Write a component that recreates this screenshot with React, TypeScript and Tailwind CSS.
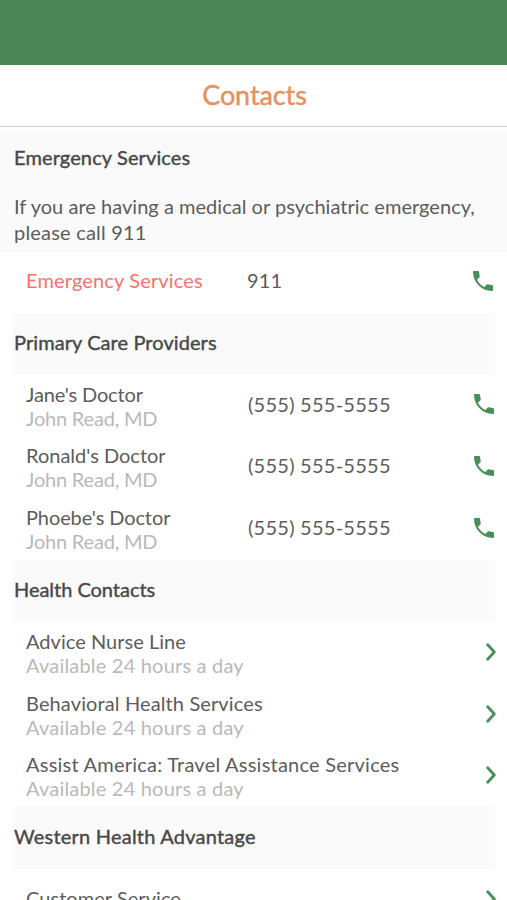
type Contact = {
  name: string
  nameClass: string
  note?: string
  noteClass?: string
  phone?: string
}

type Section = {
  title: string
  titleClass: string
  contacts: Contact[]
}

const sections: Section[] = [
  {
    title: 'Primary Care Providers',
    titleClass: 'tracking-[0.08px]',
    contacts: [
      { name: "Jane's Doctor", nameClass: 'tracking-[-0.15px]', note: 'John Read, MD', noteClass: 'tracking-[-0.2px]', phone: '(555) 555-5555' },
      { name: "Ronald's Doctor", nameClass: 'tracking-[0px]', note: 'John Read, MD', noteClass: 'tracking-[-0.2px]', phone: '(555) 555-5555' },
      { name: "Phoebe's Doctor", nameClass: 'tracking-[-0.1px]', note: 'John Read, MD', noteClass: 'tracking-[-0.2px]', phone: '(555) 555-5555' },
    ],
  },
  {
    title: 'Health Contacts',
    titleClass: 'tracking-[-0.03px]',
    contacts: [
      { name: 'Advice Nurse Line', nameClass: 'tracking-[0.03px]', note: 'Available 24 hours a day', noteClass: 'tracking-[0.2px]' },
      { name: 'Behavioral Health Services', nameClass: 'tracking-[0.12px]', note: 'Available 24 hours a day', noteClass: 'tracking-[0.2px]' },
      { name: 'Assist America: Travel Assistance Services', nameClass: 'tracking-[0.23px]', note: 'Available 24 hours a day', noteClass: 'tracking-[0.2px]' },
    ],
  },
  {
    title: 'Western Health Advantage',
    titleClass: 'tracking-[0.22px]',
    contacts: [{ name: 'Customer Service', nameClass: 'pb-1 tracking-[0.05px]' }],
  },
]

function PhoneIcon() {
  return (
    <svg viewBox="3 3 18 18" className="mb-[3px] h-5 w-5 shrink-0 fill-[#489059]">
      <path d="M6.62 10.79c1.44 2.83 3.76 5.14 6.59 6.59l2.2-2.2c.27-.27.67-.36 1.02-.24 1.12.37 2.33.57 3.57.57.55 0 1 .45 1 1V20c0 .55-.45 1-1 1-9.39 0-17-7.61-17-17 0-.55.45-1 1-1h3.5c.55 0 1 .45 1 1 0 1.25.2 2.45.57 3.57.11.35.03.74-.25 1.02l-2.2 2.2z" />
    </svg>
  )
}

function ChevronIcon() {
  return (
    <svg viewBox="0 0 10 18" className="h-[18px] w-[10px] shrink-0 fill-none stroke-[#489059]">
      <path d="M1.7 1.7 8.3 9l-6.6 7.3" strokeWidth="2.8" strokeLinecap="round" strokeLinejoin="round" />
    </svg>
  )
}

function ContactRow({ contact }: { contact: Contact }) {
  return (
    <div className="flex h-[61.8px] items-center pr-[13px] pl-[26px]">
      <div className={contact.phone ? 'w-[222px] shrink-0' : 'flex-1'}>
        <div className={`leading-6 whitespace-nowrap ${contact.nameClass}`}>{contact.name}</div>
        {contact.note && (
          <div className={`leading-6 whitespace-nowrap text-[#b9b9b9] ${contact.noteClass}`}>{contact.note}</div>
        )}
      </div>
      {contact.phone ? (
        <>
          <div className="flex-1 pb-1 tracking-[0.25px]">{contact.phone}</div>
          <PhoneIcon />
        </>
      ) : (
        <div className="-mr-[2px] mb-[2px] flex">
          <ChevronIcon />
        </div>
      )}
    </div>
  )
}

export default function App() {
  return (
    <div className="h-[900px] w-[507px] overflow-hidden bg-white font-['Lato','Open_Sans',sans-serif] text-[20px] text-[#5c5c5c]">
      {/* Status bar */}
      <div className="h-[65px] bg-[#4c8658]" />

      {/* Title */}
      <header className="flex h-[62px] items-center justify-center border-b border-[#cfd2d0]">
        <h1 className="pl-[2px] text-[27px] tracking-[-0.1px] text-[#e88f5c] [-webkit-text-stroke:0.4px]">Contacts</h1>
      </header>

      {/* Emergency notice */}
      <div className="mt-[3px] h-[122px] bg-[#fafafa] px-[14px] pt-[15px]">
        <h2 className="leading-6 tracking-[0.12px] text-[#484848] [-webkit-text-stroke:0.4px]">Emergency Services</h2>
        <p className="mt-6 leading-[26px] whitespace-nowrap tracking-[0.03px]">
          If you are having a medical or psychiatric emergency,
          <br />
          <span className="tracking-[0.2px]">please call 911</span>
        </p>
      </div>

      <div className="flex h-[61px] items-center pr-[14px] pl-[26px]">
        <div className="w-[221px] pb-[5px] tracking-[0.15px] text-[#f5736b]">Emergency Services</div>
        <div className="flex-1 pb-[5px] tracking-[0.2px]">911</div>
        <PhoneIcon />
      </div>

      {sections.map(section => (
        <section key={section.title}>
          <div className="mr-3 ml-[13px] flex h-[61.8px] items-center bg-[#fafafa] pb-1 pl-px">
            <h2 className={`text-[#484848] [-webkit-text-stroke:0.4px] ${section.titleClass}`}>{section.title}</h2>
          </div>
          {section.contacts.map(contact => (
            <ContactRow key={contact.name} contact={contact} />
          ))}
        </section>
      ))}
    </div>
  )
}
